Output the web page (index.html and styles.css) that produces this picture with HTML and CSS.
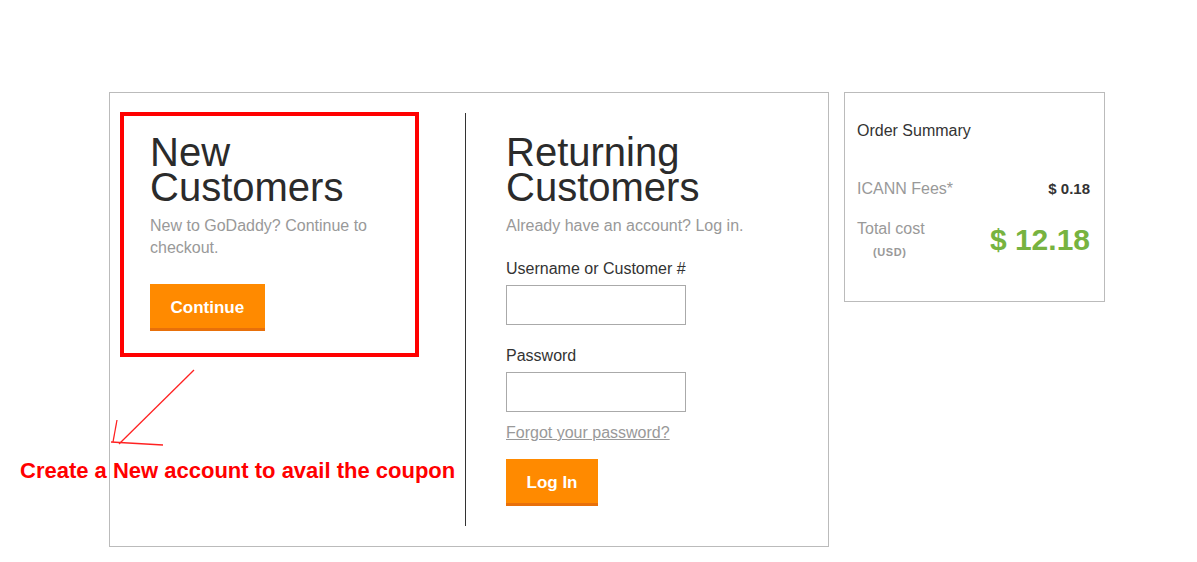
FILE: index.html
```html
<!DOCTYPE html>
<html lang="en">
<head>
  <meta charset="UTF-8">
  <meta name="viewport" content="width=device-width, initial-scale=1.0">
  <title>Checkout - Sign In</title>
  <link rel="stylesheet" href="styles.css">
</head>
<body>
  <div class="page">
    <div class="login-box">
      <div class="col col-new">
        <h1>New<br>Customers</h1>
        <p class="hint">New to GoDaddy? Continue to checkout.</p>
        <button type="button" class="btn">Continue</button>
      </div>

      <form class="col col-return">
        <h1>Returning<br>Customers</h1>
        <p class="hint">Already have an account? Log in.</p>

        <label for="username">Username or Customer #</label>
        <input type="text" id="username" name="username">

        <label for="password" class="pw-label">Password</label>
        <input type="password" id="password" name="password">

        <a href="#" class="forgot">Forgot your password?</a>
        <button type="submit" class="btn btn-login">Log In</button>
      </form>

      <!-- annotation drawn over the screenshot -->
      <div class="highlight"></div>
    </div>

    <div class="summary">
      <h2>Order Summary</h2>
      <div class="row fees">
        <span class="label">ICANN Fees*</span>
        <span class="fee">$ 0.18</span>
      </div>
      <div class="row total">
        <div>
          <div class="label">Total cost</div>
          <div class="currency">(USD)</div>
        </div>
        <span class="amount">$ 12.18</span>
      </div>
    </div>

    <svg class="arrow" width="200" height="100" viewBox="100 360 100 100">
      <line x1="194" y1="370" x2="119" y2="444" />
      <line x1="117" y1="420" x2="113" y2="442" />
      <line x1="111" y1="442" x2="163" y2="445" />
    </svg>
    <div class="note">Create a New account to avail the coupon</div>
  </div>
</body>
</html>
```

FILE: styles.css
```css
body {
  margin: 0;
  font-family: Arial, "Liberation Sans", sans-serif;
  color: #333;
  background: #fff;
}
.page {
  position: relative;
  display: flex;
  align-items: flex-start;
  gap: 15px;
  padding: 92px 0 0 109px;
}
.login-box {
  position: relative;
  display: flex;
  width: 718px;
  height: 413px;
  padding: 20px 0;
  border: 1px solid #bbb;
}
.col {
  display: flex;
  flex-direction: column;
  align-items: flex-start;
}
.col-new {
  width: 315px;
  padding-left: 40px;
}
.col-return {
  flex: 1;
  padding-left: 40px;
  border-left: 1px solid #333;
}
h1 {
  margin: 22px 0 0;
  font-size: 40px;
  font-weight: normal;
  line-height: 35px;
  color: #2b2b2b;
}
.hint {
  margin: 10px 0 0;
  font-size: 16px;
  line-height: 22px;
  color: #999;
  max-width: 230px;
}
.col-return .hint {
  max-width: none;
}
.btn {
  margin-top: 25px;
  padding: 4px 20.5px 0;
  height: 47px;
  font-family: inherit;
  font-size: 17px;
  font-weight: bold;
  color: #fff;
  background-color: #ff8a00;
  border: none;
  border-bottom: 3px solid #e8700a;
  cursor: pointer;
}
.btn:hover {
  background-color: #f07d00;
}
label {
  margin-top: 21px;
  font-size: 16px;
  line-height: 22px;
  color: #333;
}
.pw-label {
  margin-top: 20px;
}
input {
  box-sizing: border-box;
  width: 180px;
  height: 40px;
  margin-top: 5px;
  padding: 6px;
  font-size: 16px;
  border: 1px solid #aaa;
}
.forgot {
  margin-top: 10px;
  font-size: 16px;
  line-height: 22px;
  color: #999;
}
.btn-login {
  margin-top: 15px;
}
.highlight {
  position: absolute;
  left: 10px;
  top: 19px;
  width: 291px;
  height: 237px;
  border: 4px solid #f00;
}
.summary {
  width: 233px;
  padding: 27px 14px 41px 12px;
  border: 1px solid #bbb;
}
.summary h2 {
  margin: 0;
  font-size: 16px;
  font-weight: normal;
  line-height: 22px;
  color: #333;
}
.row {
  display: flex;
  justify-content: space-between;
  align-items: flex-start;
}
.fees {
  margin-top: 36px;
}
.total {
  margin-top: 18px;
}
.label {
  font-size: 16px;
  line-height: 22px;
  color: #999;
}
.fee {
  font-size: 15px;
  font-weight: bold;
  line-height: 22px;
  color: #333;
}
.currency {
  margin: 4px 0 0 16px;
  font-size: 11px;
  font-weight: bold;
  letter-spacing: 0.6px;
  line-height: 16px;
  color: #999;
}
.amount {
  margin-top: 4px;
  font-size: 30px;
  font-weight: bold;
  line-height: 36px;
  color: #77b340;
}
.arrow {
  position: absolute;
  left: 100px;
  top: 360px;
  width: 100px;
  height: 100px;
  stroke: #f22;
  stroke-width: 1.3;
}
.note {
  position: absolute;
  left: 20px;
  top: 458px;
  font-family: "Comic Sans MS", "Liberation Sans", sans-serif;
  font-size: 22px;
  font-weight: bold;
  line-height: 26px;
  color: #f00;
}
```
